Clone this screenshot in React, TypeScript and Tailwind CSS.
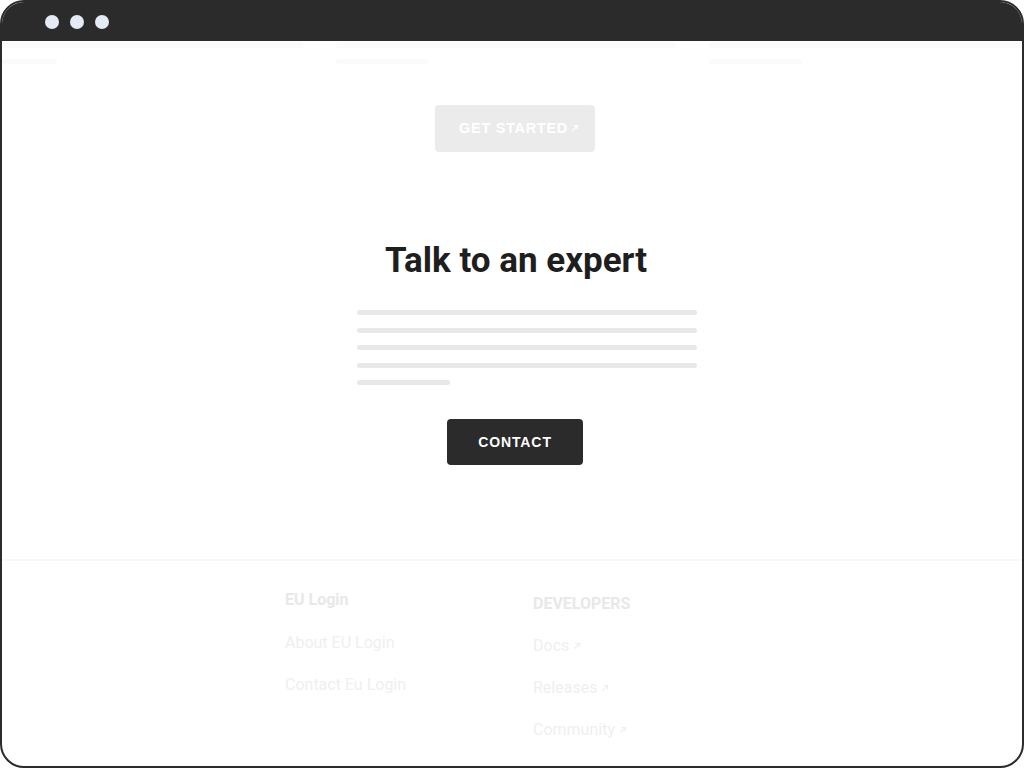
import React from "react";

const Arrow = ({ className }: { className?: string }) => (
  <svg viewBox="0 0 10 10" className={className} fill="none" stroke="currentColor" strokeWidth={1.5}>
    <path d="M1.5 8.5 L8 2 M3 2 H8 V7" />
  </svg>
);

const App = () => {
  return (
    <div className="w-[1024px] h-[768px] bg-white">
      <div
        className="w-full h-full border-2 border-[#2b2b2b] rounded-[24px] overflow-hidden flex flex-col bg-white"
        style={{ fontFamily: "Roboto, 'Liberation Sans', sans-serif" }}
      >
        {/* title bar */}
        <div className="h-[39px] bg-[#2b2b2b] flex items-center pl-[43px] gap-[11px] shrink-0">
          <div className="w-[14px] h-[14px] rounded-full bg-[#e4ebf6]" />
          <div className="w-[14px] h-[14px] rounded-full bg-[#e4ebf6]" />
          <div className="w-[14px] h-[14px] rounded-full bg-[#e4ebf6]" />
        </div>

        {/* faded nav placeholder */}
        <div className="flex gap-[33px] h-[6px] mt-[1px]">
          <div className="w-[301px] bg-[#fbfbfb] rounded-sm" />
          <div className="w-[340px] bg-[#fbfbfb] rounded-sm" />
          <div className="flex-1 bg-[#fbfbfb] rounded-sm" />
        </div>
        <div className="flex gap-[33px] h-[5px] mt-[11px]">
          <div className="w-[301px]">
            <div className="w-[55px] h-full bg-[#fafafa] rounded-sm" />
          </div>
          <div className="w-[340px]">
            <div className="w-[92px] h-full bg-[#fafafa] rounded-sm" />
          </div>
          <div className="flex-1">
            <div className="w-[93px] h-full bg-[#fafafa] rounded-sm" />
          </div>
        </div>

        {/* hero */}
        <div className="flex flex-col items-center">
          <button
            className="mt-[41px] ml-[6px] w-[160px] h-[47px] pl-[8px] pt-[1px] rounded bg-[#ebebeb] text-white font-bold text-[14.5px] tracking-[0.7px] flex items-center justify-center gap-[3px]"
            style={{ fontFamily: "'Liberation Sans', Arial, sans-serif" }}
          >
            GET STARTED
            <Arrow className="w-[8px] h-[8px] -mt-[3px]" />
          </button>

          <h1 className="mt-[89px] ml-[8px] text-[35px] leading-[40px] font-bold text-[#1e1e1e]">
            Talk to an expert
          </h1>

          <div className="mt-[29px] ml-[30px] w-[340px] flex flex-col gap-[12.5px]">
            <div className="h-[5px] rounded-full bg-[#e8e8e8]" />
            <div className="h-[5px] rounded-full bg-[#e8e8e8]" />
            <div className="h-[5px] rounded-full bg-[#e8e8e8]" />
            <div className="h-[5px] rounded-full bg-[#e8e8e8]" />
            <div className="h-[5px] w-[93px] rounded-full bg-[#e8e8e8]" />
          </div>

          <button
            className="mt-[34px] ml-[6px] w-[136px] h-[46px] rounded bg-[#2b2b2b] text-white font-bold text-[14px] tracking-[0.9px] flex items-center justify-center"
            style={{ fontFamily: "'Liberation Sans', Arial, sans-serif" }}
          >
            CONTACT
          </button>
        </div>

        {/* footer */}
        <div className="mt-[94px] h-[2px] bg-[#f8f8f8]" />
        <div className="flex pl-[283px] pt-[27px] text-[16px] leading-[24px]">
          <div className="w-[248px] flex flex-col">
            <div className="font-bold text-[#e8e8e8]">EU Login</div>
            <div className="mt-[19px] text-[#efefef]">About EU Login</div>
            <div className="mt-[18px] text-[#efefef]">Contact Eu Login</div>
          </div>
          <div className="flex flex-col pt-[4px]">
            <div className="font-bold text-[#e8e8e8]">DEVELOPERS</div>
            <div className="mt-[18px] text-[#efefef] flex items-center gap-[4px]">
              Docs <Arrow className="w-[8px] h-[8px]" />
            </div>
            <div className="mt-[18px] text-[#efefef] flex items-center gap-[4px]">
              Releases <Arrow className="w-[8px] h-[8px]" />
            </div>
            <div className="mt-[18px] text-[#efefef] flex items-center gap-[4px]">
              Community <Arrow className="w-[8px] h-[8px]" />
            </div>
          </div>
        </div>
      </div>
    </div>
  );
};

export default App;
